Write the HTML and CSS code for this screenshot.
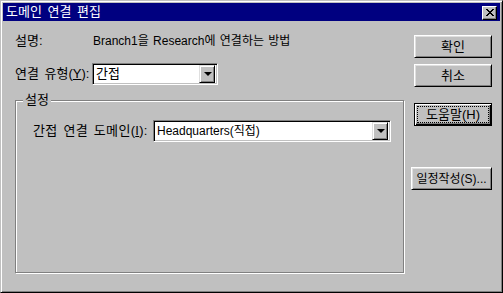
FILE: index.html
```html
<!DOCTYPE html>
<html lang="ko">
<head>
    <meta charset="UTF-8">
    <title>도메인 연결 편집</title>
    <link rel="stylesheet" href="styles.css">
</head>
<body>
    <div class="window">
        <div class="titlebar">
            <span class="title">도메인 연결 편집</span>
            <span class="close-btn">
                <svg width="8" height="7" viewBox="0 0 8 7" shape-rendering="crispEdges">
                    <path d="M0 0h2v1h-2z M6 0h2v1h-2z M1 1h2v1h-2z M5 1h2v1h-2z M2 2h4v1h-4z M3 3h2v1h-2z M2 4h4v1h-4z M1 5h2v1h-2z M5 5h2v1h-2z M0 6h2v1h-2z M6 6h2v1h-2z" fill="#000"/>
                </svg>
            </span>
        </div>

        <div class="client">
            <div class="main">
                <div class="row desc-row">
                    <span class="label label-desc">설명:</span>
                    <span class="desc">Branch1을 Research에 연결하는 방법</span>
                </div>

                <div class="row type-row">
                    <span class="label label-type">연결 유형(<u>Y</u>):</span>
                    <div class="combo combo-type">
                        <span class="combo-text combo-text-ko">간접</span>
                        <span class="combo-btn"><span class="arrow"></span></span>
                    </div>
                </div>

                <div class="group">
                    <span class="group-title">설정</span>
                    <div class="row">
                        <span class="label label-domain">간접 연결 도메인(<u>I</u>):</span>
                        <div class="combo combo-domain">
                            <span class="combo-text">Headquarters(직접)</span>
                            <span class="combo-btn"><span class="arrow"></span></span>
                        </div>
                    </div>
                </div>
            </div>

            <div class="buttons">
                <button class="btn">확인</button>
                <button class="btn btn-cancel">취소</button>
                <button class="btn btn-default btn-help"><span class="focus">도움말(H)</span></button>
                <button class="btn btn-schedule">일정작성(S)...</button>
            </div>
        </div>
    </div>
</body>
</html>
```

FILE: styles.css
```css
body {
    margin: 0;
    background: #c0c0c0;
    font-family: "Liberation Sans", "Noto Sans CJK KR", sans-serif;
    font-size: 12px;
    line-height: 14px;
    color: #000;
}
.window {
    box-sizing: border-box;
    width: 503px;
    height: 293px;
    padding: 2px;
    background: #c0c0c0;
    border: 1px solid;
    border-color: #c0c0c0 #000 #000 #c0c0c0;
    box-shadow: inset 1px 1px 0 #fff, inset -1px -1px 0 #808080;
    display: flex;
    flex-direction: column;
}
.titlebar {
    height: 18px;
    background: #000080;
    color: #fff;
    display: flex;
    align-items: center;
    justify-content: space-between;
    padding: 0 3px 0 3px;
}
.title {
    font-size: 13px;
    word-spacing: 2px;
}
.close-btn {
    box-sizing: border-box;
    width: 15px;
    height: 14px;
    background: #c0c0c0;
    border: 1px solid;
    border-color: #fff #000 #000 #fff;
    box-shadow: inset -1px -1px 0 #808080;
    display: flex;
    align-items: center;
    justify-content: center;
    margin-top: 1px;
}
.client {
    flex: 1;
    display: flex;
    justify-content: space-between;
    padding: 0 8px 0 12px;
}
.main {
    width: 389px;
    padding-top: 13px;
}
.row {
    display: flex;
    align-items: center;
}
.label {
    flex: none;
    font-size: 13px;
    word-spacing: 2px;
}
.desc {
    white-space: nowrap;
    word-spacing: 1px;
}
.label-desc {
    width: 78px;
}
.type-row {
    margin-top: 15px;
}
.label-type {
    width: 77px;
}
.label-domain {
    width: 120px;
    letter-spacing: 0.3px;
}
.combo {
    box-sizing: border-box;
    height: 22px;
    background: #fff;
    border: 1px solid;
    border-color: #808080 #fff #fff #808080;
    box-shadow: inset 1px 1px 0 #000, inset -1px -1px 0 #c0c0c0;
    display: flex;
    align-items: center;
    padding: 2px 2px 2px 3px;
}
.combo-type {
    width: 126px;
}
.combo-domain {
    width: 238px;
}
.combo-text {
    flex: 1;
    white-space: nowrap;
}
.combo-text-ko {
    font-size: 13px;
}
.combo-btn {
    box-sizing: border-box;
    width: 16px;
    height: 18px;
    background: #c0c0c0;
    border: 1px solid;
    border-color: #dfdfdf #000 #000 #dfdfdf;
    box-shadow: inset 1px 1px 0 #fff, inset -1px -1px 0 #808080;
    display: flex;
    align-items: center;
    justify-content: center;
}
.arrow {
    width: 0;
    height: 0;
    border-left: 4px solid transparent;
    border-right: 4px solid transparent;
    border-top: 4px solid #000;
    margin-left: 1px;
}
.group {
    position: relative;
    box-sizing: border-box;
    height: 173px;
    margin-top: 15px;
    border: 1px solid #808080;
    box-shadow: inset 1px 1px 0 #fff, 1px 1px 0 #fff;
    padding: 19px 0 0 17px;
}
.group-title {
    position: absolute;
    top: -8px;
    left: 7px;
    padding: 0 2px;
    font-size: 13px;
    background: #c0c0c0;
}
.buttons {
    display: flex;
    flex-direction: column;
    align-items: flex-end;
    padding-top: 14px;
}
.btn {
    box-sizing: border-box;
    width: 78px;
    height: 23px;
    padding: 0;
    font: inherit;
    font-size: 13px;
    color: #000;
    background: #c0c0c0;
    border: 1px solid;
    border-color: #fff #000 #000 #fff;
    box-shadow: inset 1px 1px 0 #dfdfdf, inset -1px -1px 0 #808080;
}
.btn-cancel {
    margin-top: 6px;
}
.btn-default {
    border: 1px solid #000;
    box-shadow: inset 1px 1px 0 #fff, inset -1px -1px 0 #000, inset -2px -2px 0 #808080;
}
.btn-help {
    margin-top: 16px;
}
.focus {
    display: block;
    margin: 1px 2px 1px 2px;
    height: 15px;
    line-height: 15px;
    border: 1px dotted #000;
}
.btn-schedule {
    width: 81px;
    margin-top: 41px;
    white-space: nowrap;
    font-size: 12px;
}
```
